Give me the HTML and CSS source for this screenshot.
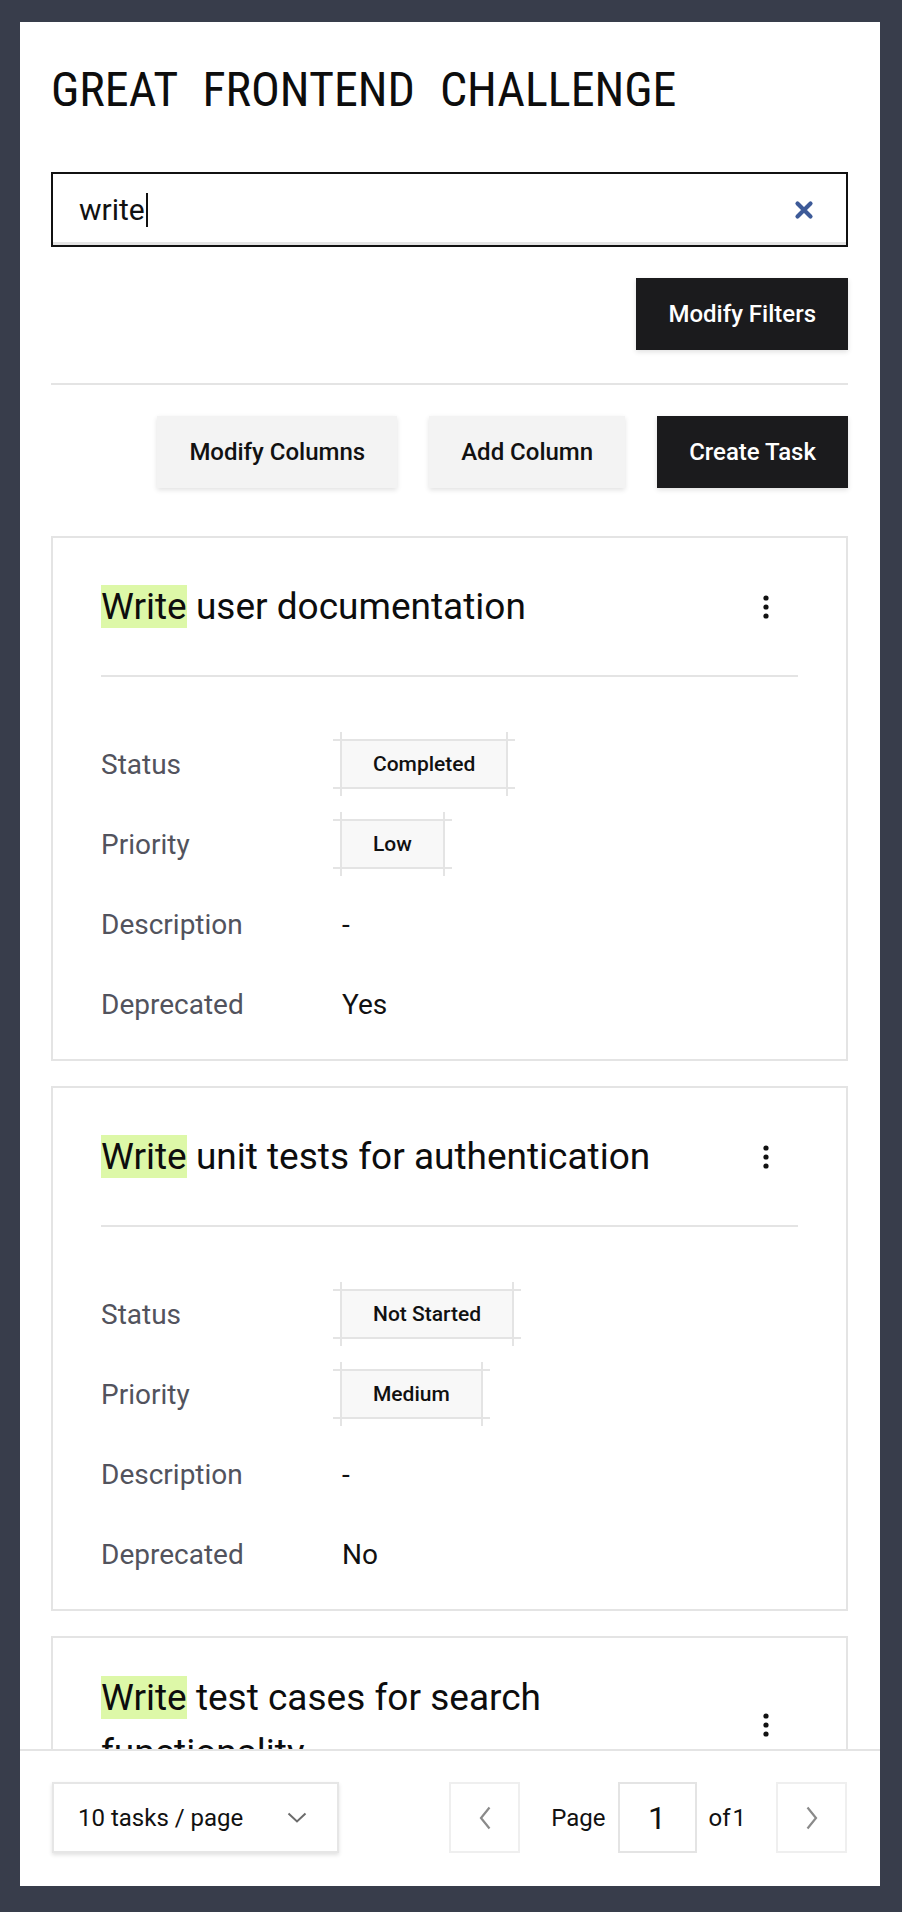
FILE: index.html
```html
<!DOCTYPE html>
<html lang="en">
<head>
<meta charset="utf-8">
<title>Great Frontend Challenge</title>
<link rel="stylesheet" href="styles.css">
</head>
<body>
<div class="app">
  <main class="main">
    <h1 class="title">GREAT FRONTEND CHALLENGE</h1>

    <div class="search">
      <span class="search-text">write</span><span class="caret"></span>
      <button class="search-clear" aria-label="Clear search">
        <svg width="20" height="20" viewBox="0 0 20 20"><path d="M3.5 3.5 L16.5 16.5 M16.5 3.5 L3.5 16.5" stroke="#3d5a98" stroke-width="4.2" stroke-linecap="round" fill="none"/></svg>
      </button>
    </div>

    <div class="filters-row">
      <button class="btn btn-dark">Modify Filters</button>
    </div>

    <hr class="divider">

    <div class="toolbar">
      <button class="btn btn-light">Modify Columns</button>
      <button class="btn btn-light">Add Column</button>
      <button class="btn btn-dark">Create Task</button>
    </div>

    <div class="cards">
      <article class="card">
        <header class="card-head">
          <h2 class="card-title"><mark class="hl">Write</mark> user documentation</h2>
          <button class="kebab" aria-label="More"><svg width="6" height="24" viewBox="0 0 6 24"><circle cx="3" cy="3" r="2.6"/><circle cx="3" cy="12" r="2.6"/><circle cx="3" cy="21" r="2.6"/></svg></button>
        </header>
        <dl class="fields">
          <dt>Status</dt><dd><span class="badge">Completed</span></dd>
          <dt>Priority</dt><dd><span class="badge">Low</span></dd>
          <dt>Description</dt><dd>-</dd>
          <dt>Deprecated</dt><dd>Yes</dd>
        </dl>
      </article>

      <article class="card">
        <header class="card-head">
          <h2 class="card-title"><mark class="hl">Write</mark> unit tests for authentication</h2>
          <button class="kebab" aria-label="More"><svg width="6" height="24" viewBox="0 0 6 24"><circle cx="3" cy="3" r="2.6"/><circle cx="3" cy="12" r="2.6"/><circle cx="3" cy="21" r="2.6"/></svg></button>
        </header>
        <dl class="fields">
          <dt>Status</dt><dd><span class="badge">Not Started</span></dd>
          <dt>Priority</dt><dd><span class="badge">Medium</span></dd>
          <dt>Description</dt><dd>-</dd>
          <dt>Deprecated</dt><dd>No</dd>
        </dl>
      </article>

      <article class="card">
        <header class="card-head">
          <h2 class="card-title"><mark class="hl">Write</mark> test cases for search functionality</h2>
          <button class="kebab" aria-label="More"><svg width="6" height="24" viewBox="0 0 6 24"><circle cx="3" cy="3" r="2.6"/><circle cx="3" cy="12" r="2.6"/><circle cx="3" cy="21" r="2.6"/></svg></button>
        </header>
        <dl class="fields">
          <dt>Status</dt><dd><span class="badge">In Progress</span></dd>
          <dt>Priority</dt><dd><span class="badge">High</span></dd>
          <dt>Description</dt><dd>-</dd>
          <dt>Deprecated</dt><dd>No</dd>
        </dl>
      </article>
    </div>
  </main>

  <footer class="footer">
    <div class="page-size">
      <span>10 tasks / page</span>
      <svg width="20" height="11" viewBox="0 0 20 11"><polyline points="1.5,1.5 10,9.5 18.5,1.5" fill="none" stroke="#6b6b6b" stroke-width="2"/></svg>
    </div>
    <div class="pager">
      <button class="pager-btn pager-prev" aria-label="Previous page"><svg width="12" height="24" viewBox="0 0 12 24"><polyline points="10.5,1.5 2,12 10.5,22.5" fill="none" stroke="#8a8a8a" stroke-width="2.2"/></svg></button>
      <span class="pager-label">Page</span>
      <span class="pager-input">1</span>
      <span class="pager-label pager-of">of 1</span>
      <button class="pager-btn pager-next" aria-label="Next page"><svg width="12" height="24" viewBox="0 0 12 24"><polyline points="1.5,1.5 10,12 1.5,22.5" fill="none" stroke="#8a8a8a" stroke-width="2.2"/></svg></button>
    </div>
  </footer>
</div>
</body>
</html>
```

FILE: styles.css
```css
* { box-sizing: border-box; }

html, body {
  margin: 0;
  padding: 0;
}

body {
  background: #383d4b;
  font-family: Roboto, "Liberation Sans", sans-serif;
  color: #111;
  padding: 22px 22px 0 20px;
}

button {
  font-family: inherit;
  border: none;
  background: none;
  padding: 0;
  margin: 0;
  cursor: pointer;
  color: inherit;
}

.app {
  width: 860px;
  height: 1864px;
  background: #fff;
  display: flex;
  flex-direction: column;
}

.main {
  flex: 1;
  overflow: hidden;
  padding: 38px 32px 0 31px;
}

.title {
  margin: 0;
  height: 60px;
  line-height: 60px;
  font-family: "Roboto Condensed", "Liberation Sans Narrow", "DejaVu Sans Condensed", Roboto, sans-serif;
  font-stretch: condensed;
  font-weight: 400;
  font-size: 48px;
  word-spacing: 14px;
  color: #0d0d0d;
  white-space: nowrap;
}

.search {
  margin-top: 52px;
  height: 75px;
  border: 2px solid #111;
  box-shadow: inset 0 -3px 0 #e4e4e4;
  display: flex;
  align-items: center;
  padding: 0 32px 0 26px;
  font-size: 30px;
}

.search-text {
  line-height: 1;
}

.caret {
  display: inline-block;
  width: 2px;
  height: 34px;
  background: #111;
  margin-left: 1px;
}

.search-clear {
  margin-left: auto;
  display: flex;
}

.filters-row {
  margin-top: 31px;
  display: flex;
  justify-content: flex-end;
}

.btn {
  height: 72px;
  padding: 0 32px;
  font-size: 24px;
  font-weight: 500;
  box-shadow: 0 2px 5px rgba(0, 0, 0, 0.12);
}

.btn-dark {
  background: #1b1b1d;
  color: #fff;
}

.btn-light {
  background: #f3f3f3;
  color: #111;
}

.divider {
  margin: 33px 0 0;
  border: none;
  height: 2px;
  background: #e4e4e4;
}

.toolbar {
  margin-top: 31px;
  display: flex;
  justify-content: flex-end;
  gap: 32px;
}

.cards {
  margin-top: 48px;
  display: flex;
  flex-direction: column;
  gap: 25px;
}

.card {
  border: 2px solid #e4e4e4;
  padding: 32px 48px 30px;
}

.card-head {
  display: flex;
  align-items: center;
  min-height: 107px;
  padding-bottom: 32px;
  border-bottom: 2px solid #e4e4e4;
}

.card-title {
  margin: 0;
  flex: 1;
  font-size: 37px;
  font-weight: 400;
  line-height: 55px;
  color: #0d0d0d;
  max-width: 620px;
}

.hl {
  background: #ddf8a8;
  color: inherit;
}

.kebab {
  width: 64px;
  margin-left: auto;
  display: flex;
  justify-content: center;
  align-items: center;
  fill: #111;
}

.fields {
  margin: 0;
  padding-top: 62px;
  display: grid;
  grid-template-columns: 239px 1fr;
  grid-auto-rows: 50px;
  row-gap: 30px;
  align-items: center;
  font-size: 28px;
}

.fields dt {
  color: #52535d;
}

.fields dd {
  margin: 0;
  color: #111;
  padding-left: 2px;
}

.badge {
  position: relative;
  display: inline-flex;
  align-items: center;
  height: 50px;
  padding: 0 33px;
  background: #f8f8f8;
  font-size: 21px;
  font-weight: 500;
  margin-left: -2px;
}

.badge::before {
  content: "";
  position: absolute;
  left: -7px;
  right: -7px;
  top: 0;
  bottom: 0;
  border-top: 2px solid #e4e4e4;
  border-bottom: 2px solid #e4e4e4;
}

.badge::after {
  content: "";
  position: absolute;
  left: 0;
  right: 0;
  top: -7px;
  bottom: -7px;
  border-left: 2px solid #e4e4e4;
  border-right: 2px solid #e4e4e4;
}

.footer {
  border-top: 2px solid #e4e4e4;
  padding: 31px 33px 33px 32px;
  display: flex;
  justify-content: space-between;
  align-items: center;
}

.page-size {
  width: 287px;
  height: 71px;
  border: 2px solid #e6e6e6;
  box-shadow: 0 2px 4px rgba(0, 0, 0, 0.12);
  display: flex;
  align-items: center;
  justify-content: space-between;
  padding: 0 30px 0 24px;
  font-size: 24px;
}

.pager {
  display: flex;
  align-items: center;
  gap: 12px;
}

.pager-btn {
  width: 71px;
  height: 71px;
  border: 2px solid #efefef;
  display: flex;
  align-items: center;
  justify-content: center;
}

.pager-prev { margin-right: 19px; }
.pager-next { margin-left: 18px; }

.pager-label {
  font-size: 24px;
}

.pager-of {
  word-spacing: -4px;
}

.pager-input {
  width: 79px;
  height: 71px;
  border: 2px solid #e4e4e4;
  display: flex;
  align-items: center;
  justify-content: center;
  font-size: 32px;
}
```
